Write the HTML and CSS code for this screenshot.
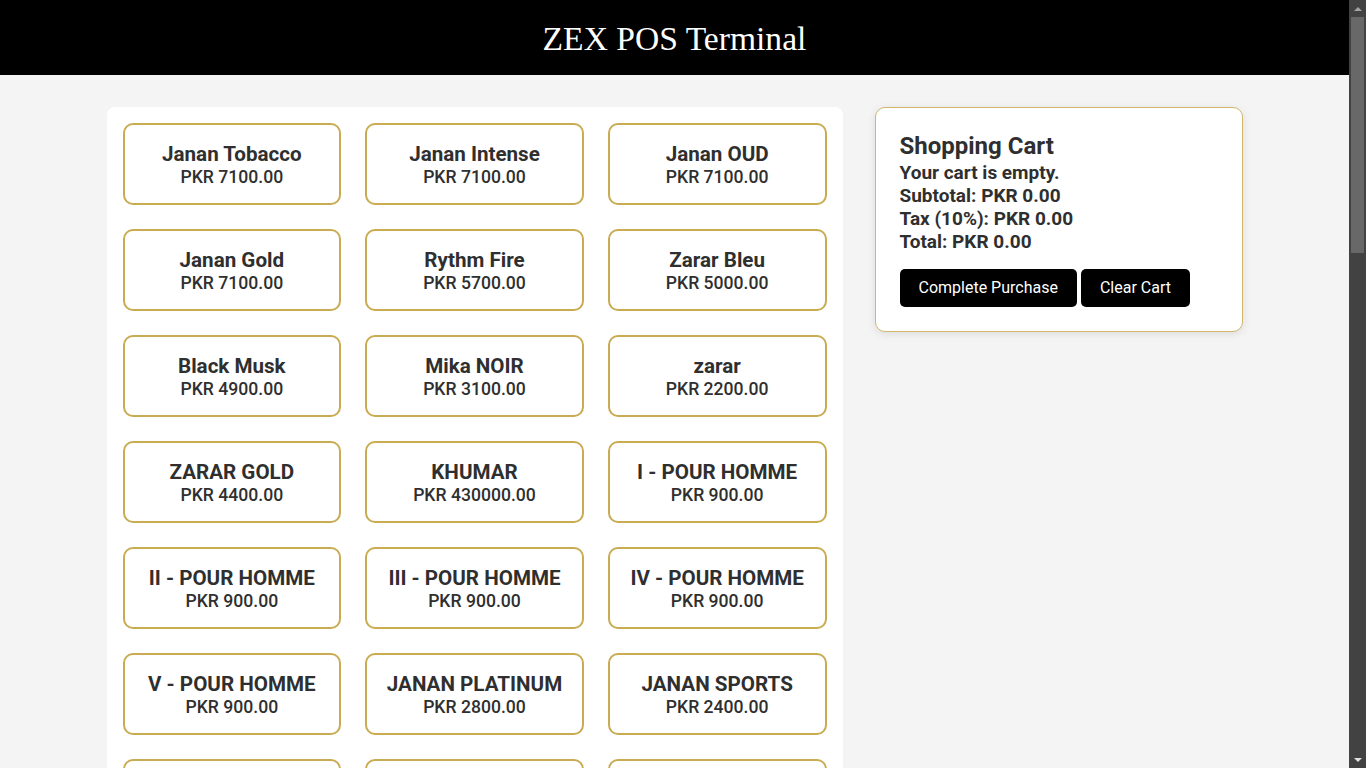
FILE: index.html
```html
<!DOCTYPE html>
<html lang="en">
<head>
<meta charset="utf-8">
<title>ZEX POS Terminal</title>
<link rel="stylesheet" href="styles.css">
</head>
<body>
<header class="topbar">
  <h1 class="brand">ZEX POS Terminal</h1>
</header>
<main class="layout">
  <section class="products">
    <div class="card"><div class="name">Janan Tobacco</div><div class="price">PKR 7100.00</div></div>
    <div class="card"><div class="name">Janan Intense</div><div class="price">PKR 7100.00</div></div>
    <div class="card"><div class="name">Janan OUD</div><div class="price">PKR 7100.00</div></div>
    <div class="card"><div class="name">Janan Gold</div><div class="price">PKR 7100.00</div></div>
    <div class="card"><div class="name">Rythm Fire</div><div class="price">PKR 5700.00</div></div>
    <div class="card"><div class="name">Zarar Bleu</div><div class="price">PKR 5000.00</div></div>
    <div class="card"><div class="name">Black Musk</div><div class="price">PKR 4900.00</div></div>
    <div class="card"><div class="name">Mika NOIR</div><div class="price">PKR 3100.00</div></div>
    <div class="card"><div class="name">zarar</div><div class="price">PKR 2200.00</div></div>
    <div class="card"><div class="name">ZARAR GOLD</div><div class="price">PKR 4400.00</div></div>
    <div class="card"><div class="name">KHUMAR</div><div class="price">PKR 430000.00</div></div>
    <div class="card"><div class="name">I - POUR HOMME</div><div class="price">PKR 900.00</div></div>
    <div class="card"><div class="name">II - POUR HOMME</div><div class="price">PKR 900.00</div></div>
    <div class="card"><div class="name">III - POUR HOMME</div><div class="price">PKR 900.00</div></div>
    <div class="card"><div class="name">IV - POUR HOMME</div><div class="price">PKR 900.00</div></div>
    <div class="card"><div class="name">V - POUR HOMME</div><div class="price">PKR 900.00</div></div>
    <div class="card"><div class="name">JANAN PLATINUM</div><div class="price">PKR 2800.00</div></div>
    <div class="card"><div class="name">JANAN SPORTS</div><div class="price">PKR 2400.00</div></div>
    <div class="card"><div class="name">VI - POUR HOMME</div><div class="price">PKR 900.00</div></div>
    <div class="card"><div class="name">VII - POUR HOMME</div><div class="price">PKR 900.00</div></div>
    <div class="card"><div class="name">VIII - POUR HOMME</div><div class="price">PKR 900.00</div></div>
    <div class="card"><div class="name">Janan Musk</div><div class="price">PKR 3500.00</div></div>
    <div class="card"><div class="name">Janan Amber</div><div class="price">PKR 3500.00</div></div>
    <div class="card"><div class="name">Janan Rose</div><div class="price">PKR 3500.00</div></div>
    <div class="card"><div class="name">Zarar Noir</div><div class="price">PKR 5000.00</div></div>
    <div class="card"><div class="name">Zarar Blanc</div><div class="price">PKR 5000.00</div></div>
    <div class="card"><div class="name">Zarar Rouge</div><div class="price">PKR 5000.00</div></div>
    <div class="card"><div class="name">Mika BLANC</div><div class="price">PKR 3100.00</div></div>
    <div class="card"><div class="name">Mika ROUGE</div><div class="price">PKR 3100.00</div></div>
    <div class="card"><div class="name">Mika OUD</div><div class="price">PKR 3100.00</div></div>
    <div class="card"><div class="name">Rythm Ice</div><div class="price">PKR 5700.00</div></div>
    <div class="card"><div class="name">Rythm Wood</div><div class="price">PKR 5700.00</div></div>
    <div class="card"><div class="name">Rythm Night</div><div class="price">PKR 5700.00</div></div>
    <div class="card"><div class="name">White Musk</div><div class="price">PKR 4900.00</div></div>
    <div class="card"><div class="name">Red Musk</div><div class="price">PKR 4900.00</div></div>
    <div class="card"><div class="name">Amber Musk</div><div class="price">PKR 4900.00</div></div>
    <div class="card"><div class="name">KHUMAR GOLD</div><div class="price">PKR 12000.00</div></div>
    <div class="card"><div class="name">KHUMAR NOIR</div><div class="price">PKR 12000.00</div></div>
    <div class="card"><div class="name">KHUMAR BLEU</div><div class="price">PKR 12000.00</div></div>
    <div class="card"><div class="name">ZARAR SILVER</div><div class="price">PKR 4400.00</div></div>
    <div class="card"><div class="name">ZARAR ROYAL</div><div class="price">PKR 4400.00</div></div>
    <div class="card"><div class="name">ZARAR CLASSIC</div><div class="price">PKR 4400.00</div></div>
    <div class="card"><div class="name">JANAN ROYALE</div><div class="price">PKR 2800.00</div></div>
    <div class="card"><div class="name">JANAN AQUA</div><div class="price">PKR 2400.00</div></div>
    <div class="card"><div class="name">JANAN FRESH</div><div class="price">PKR 2400.00</div></div>
    <div class="card"><div class="name">I - POUR FEMME</div><div class="price">PKR 900.00</div></div>
    <div class="card"><div class="name">II - POUR FEMME</div><div class="price">PKR 900.00</div></div>
    <div class="card"><div class="name">III - POUR FEMME</div><div class="price">PKR 900.00</div></div>
    <div class="card"><div class="name">IV - POUR FEMME</div><div class="price">PKR 900.00</div></div>
    <div class="card"><div class="name">V - POUR FEMME</div><div class="price">PKR 900.00</div></div>
    <div class="card"><div class="name">VI - POUR FEMME</div><div class="price">PKR 900.00</div></div>
    <div class="card"><div class="name">Oud Royal</div><div class="price">PKR 6500.00</div></div>
    <div class="card"><div class="name">Oud Classic</div><div class="price">PKR 6500.00</div></div>
    <div class="card"><div class="name">Oud Noir</div><div class="price">PKR 6500.00</div></div>
    <div class="card"><div class="name">Velvet Rose</div><div class="price">PKR 3800.00</div></div>
    <div class="card"><div class="name">Velvet Oud</div><div class="price">PKR 3800.00</div></div>
    <div class="card"><div class="name">Velvet Amber</div><div class="price">PKR 3800.00</div></div>
    <div class="card"><div class="name">Ocean Breeze</div><div class="price">PKR 2600.00</div></div>
    <div class="card"><div class="name">Citrus Splash</div><div class="price">PKR 2600.00</div></div>
    <div class="card"><div class="name">Vanilla Dream</div><div class="price">PKR 2600.00</div></div>
    <div class="card"><div class="name">Gift Set</div><div class="price">PKR 9500.00</div></div>
    <div class="card"><div class="name">Tester Pack</div><div class="price">PKR 1500.00</div></div>
    <div class="card"><div class="name">Travel Spray</div><div class="price">PKR 1200.00</div></div>
  </section>
  <aside class="cart">
    <h2 class="cart-title">Shopping Cart</h2>
    <p class="cart-line">Your cart is empty.</p>
    <p class="cart-line">Subtotal: PKR 0.00</p>
    <p class="cart-line">Tax (10%): PKR 0.00</p>
    <p class="cart-line">Total: PKR 0.00</p>
    <div class="actions">
      <button class="btn">Complete Purchase</button>
      <button class="btn">Clear Cart</button>
    </div>
  </aside>
</main>
<div class="scrollbar" aria-hidden="true">
  <div class="sb-arrow sb-up"></div>
  <div class="sb-track"><div class="sb-thumb"></div></div>
  <div class="sb-arrow sb-down"></div>
</div>
</body>
</html>
```
FILE: styles.css
```css
html {
  background: #424242;
}

body {
  margin: 0 17px 0 0;
  background: #f4f4f4;
  color: #333333;
  font-family: Roboto, "Liberation Sans", Arial, sans-serif;
}

.topbar {
  background: #000000;
  height: 75px;
  display: flex;
  align-items: center;
  justify-content: center;
}

.brand {
  margin: 0;
  color: #ffffff;
  font-family: "Liberation Serif", "Times New Roman", serif;
  font-weight: normal;
  font-size: 33.6px;
  line-height: 40px;
  padding-top: 2px;
}

.layout {
  max-width: 1136px;
  margin: 0 auto;
  padding: 32px 0;
  display: grid;
  grid-template-columns: 2fr 1fr;
  gap: 32px;
  align-items: start;
}

.products {
  background: #ffffff;
  border-radius: 8px;
  padding: 16px;
  display: grid;
  grid-template-columns: repeat(3, 1fr);
  gap: 24px;
}

.card {
  border: 2px solid #c9ab52;
  border-radius: 10px;
  padding: 17px 8px 15px;
  text-align: center;
  background: #ffffff;
  color: #2f2f2f;
}

.name {
  font-size: 20.6px;
  font-weight: 700;
  line-height: 24px;
}

.price {
  font-size: 17.6px;
  font-weight: 500;
  line-height: 22px;
}

.cart {
  background: #ffffff;
  border: 1px solid #d2b76a;
  border-radius: 10px;
  padding: 24px;
  box-shadow: 0 2px 8px rgba(0, 0, 0, 0.1);
  color: #2f2f2f;
}

.cart-title {
  margin: 0;
  font-size: 24px;
  font-weight: 700;
  line-height: 29px;
}

.cart-line {
  margin: 0;
  font-size: 19px;
  font-weight: 700;
  line-height: 23px;
}

.actions {
  margin-top: 16px;
  display: flex;
  gap: 4px;
}

.btn {
  background: #000000;
  color: #ffffff;
  border: none;
  border-radius: 5px;
  font-family: Roboto, "Liberation Sans", Arial, sans-serif;
  font-size: 16px;
  line-height: 18px;
  padding: 10px 19px;
  cursor: pointer;
}

/* window scrollbar (drawn, since the capture hides native ones) */
.scrollbar {
  position: fixed;
  top: 0;
  right: 0;
  width: 17px;
  height: 100vh;
  background: #424242;
  display: flex;
  flex-direction: column;
}

.sb-arrow {
  height: 17px;
  display: flex;
  align-items: center;
  justify-content: center;
}

.sb-arrow::before {
  content: "";
  width: 0;
  height: 0;
  border-left: 4px solid transparent;
  border-right: 4px solid transparent;
}

.sb-up::before {
  border-bottom: 4px solid #a3a3a3;
}

.sb-down::before {
  border-top: 4px solid #e0e0e0;
}

.sb-track {
  flex: 1;
  padding: 0 2px;
}

.sb-thumb {
  height: 236px;
  background: #686868;
}
```
